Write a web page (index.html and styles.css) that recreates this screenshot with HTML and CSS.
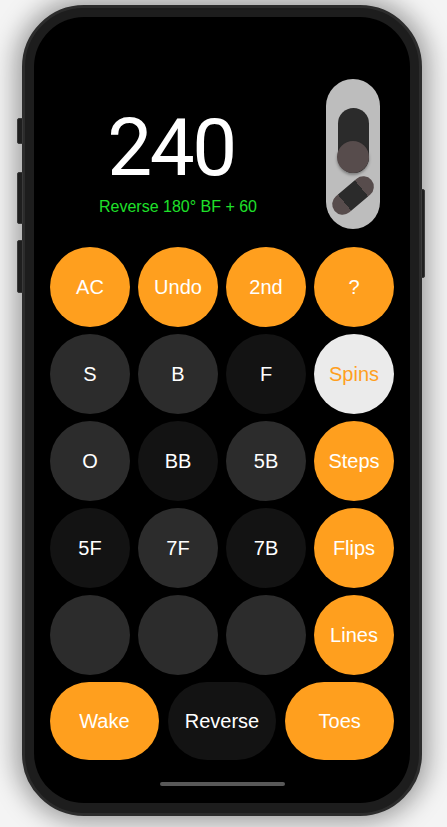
FILE: index.html
```html
<!DOCTYPE html>
<html>
<head>
<meta charset="utf-8">
<link rel="stylesheet" href="styles.css">
</head>
<body>
<div class="phone">
  <span class="side side-mute"></span>
  <span class="side side-volup"></span>
  <span class="side side-voldown"></span>
  <span class="side side-power"></span>
  <div class="screen">
    <div class="top">
      <div class="display">
        <div class="number">240</div>
        <div class="trick">Reverse 180° BF + 60</div>
      </div>
      <div class="toggle">
        <div class="slot"><div class="knob"></div></div>
        <div class="capsule"></div>
      </div>
    </div>
    <div class="keys">
      <div class="key orange">AC</div>
      <div class="key orange">Undo</div>
      <div class="key orange">2nd</div>
      <div class="key orange">?</div>
      <div class="key gray">S</div>
      <div class="key gray">B</div>
      <div class="key dark">F</div>
      <div class="key light">Spins</div>
      <div class="key gray">O</div>
      <div class="key dark">BB</div>
      <div class="key gray">5B</div>
      <div class="key orange">Steps</div>
      <div class="key dark">5F</div>
      <div class="key gray">7F</div>
      <div class="key dark">7B</div>
      <div class="key orange">Flips</div>
      <div class="key gray"></div>
      <div class="key gray"></div>
      <div class="key gray"></div>
      <div class="key orange">Lines</div>
    </div>
    <div class="bottom">
      <div class="wide orange">Wake</div>
      <div class="wide dark">Reverse</div>
      <div class="wide orange">Toes</div>
    </div>
    <div class="home"></div>
  </div>
</div>
</body>
</html>
```

FILE: styles.css
```css
html, body {
  margin: 0;
  padding: 0;
}
body {
  background: #f4f4f4;
  width: 447px;
  height: 827px;
  overflow: hidden;
  padding: 5px 0 0 22px;
  box-sizing: border-box;
  font-family: "Liberation Sans", Arial, sans-serif;
}
.phone {
  position: relative;
  width: 400px;
  height: 811px;
  box-sizing: border-box;
  border: 3px solid #2c2c2c;
  border-radius: 62px;
  background: #1d1d1d;
  padding: 9px 9px 10px 9px;
  box-shadow: 0 0 24px 7px rgba(0, 0, 0, 0.35);
}
.side {
  position: absolute;
  background: #1f1f1f;
  border: 1px solid #3a3a3a;
  box-sizing: border-box;
}
.side-mute { left: -8px; top: 110px; width: 6px; height: 26px; border-radius: 2px 0 0 2px; }
.side-volup { left: -8px; top: 164px; width: 6px; height: 52px; border-radius: 2px 0 0 2px; }
.side-voldown { left: -8px; top: 232px; width: 6px; height: 53px; border-radius: 2px 0 0 2px; }
.side-power { right: -6px; top: 181px; width: 4px; height: 89px; border-radius: 0 2px 2px 0; }

.screen {
  width: 376px;
  height: 786px;
  background: #000;
  border-radius: 50px;
  box-sizing: border-box;
  padding: 62px 0 0 0;
  display: flex;
  flex-direction: column;
  align-items: center;
}
.top {
  width: 100%;
  display: flex;
  padding-right: 30px;
  box-sizing: border-box;
  gap: 4px;
}
.display {
  flex: 1;
  display: flex;
  flex-direction: column;
  align-items: center;
  padding-top: 29px;
}
.number {
  color: #fff;
  font-family: Roboto, "Liberation Sans", sans-serif;
  font-weight: 400;
  font-size: 80px;
  line-height: 80px;
  letter-spacing: -2.5px;
  padding-right: 14px;
}
.trick {
  color: #1fe02a;
  font-size: 16px;
  line-height: 18px;
  margin-top: 10px;
}
.toggle {
  width: 54px;
  height: 150px;
  border-radius: 27px;
  background: #bdbdbd;
  display: flex;
  flex-direction: column;
  align-items: center;
  padding-top: 29px;
  box-sizing: border-box;
}
.slot {
  width: 31px;
  height: 65px;
  border-radius: 16px;
  background: #2b2b2b;
  display: flex;
  flex-direction: column;
  justify-content: flex-end;
  align-items: center;
}
.knob {
  width: 32px;
  height: 32px;
  border-radius: 50%;
  background: #574c4c;
  box-shadow: 0 2px 3px rgba(0, 0, 0, 0.35);
}
.capsule {
  margin-top: 12px;
  width: 48px;
  height: 21px;
  border-radius: 11px;
  background: linear-gradient(90deg, #574c4c 0 27%, #2b2b2b 27% 73%, #574c4c 73% 100%);
  transform: rotate(-40deg);
}
.keys {
  margin-top: 18px;
  display: grid;
  grid-template-columns: repeat(4, 80px);
  grid-auto-rows: 80px;
  column-gap: 8px;
  row-gap: 7px;
}
.key {
  border-radius: 50%;
  display: flex;
  align-items: center;
  justify-content: center;
  color: #fff;
  font-size: 20px;
}
.orange { background: #ff9f1e; color: #fff; }
.gray { background: #2c2c2c; }
.dark { background: #131313; }
.light { background: #ebebeb; color: #ff9f1e; }
.bottom {
  margin-top: 7px;
  display: flex;
  gap: 9px;
  width: 344px;
}
.wide {
  flex: 1;
  height: 78px;
  border-radius: 39px;
  display: flex;
  align-items: center;
  justify-content: center;
  color: #fff;
  font-size: 20px;
}
.home {
  margin-top: 22px;
  width: 125px;
  height: 4px;
  border-radius: 2px;
  background: #585858;
}
```
